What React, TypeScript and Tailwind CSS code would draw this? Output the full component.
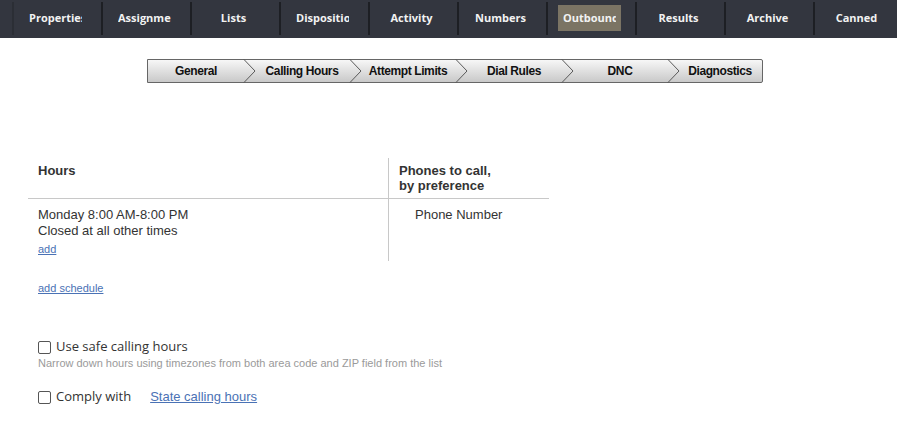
import React from 'react'

const tabs = ['Properties', 'Assignments', 'Lists', 'Dispositions', 'Activity', 'Numbers', 'Outbound', 'Results', 'Archive', 'Canned']

const steps = [
  { label: 'General', w: 'w-[96px]', pad: '' },
  { label: 'Calling Hours', w: 'w-[106px]', pad: 'pl-[10px]' },
  { label: 'Attempt Limits', w: 'w-[106px]', pad: 'pl-[10px]' },
  { label: 'Dial Rules', w: 'w-[106px]', pad: 'pl-[10px]' },
  { label: 'DNC', w: 'w-[106px]', pad: 'pl-[10px]' },
  { label: 'Diagnostics', w: 'w-[94px]', pad: 'pl-[10px]' },
]

const Chevron = () => (
  <svg className="absolute -right-[12px] top-[-1px] z-10" width="13" height="24" viewBox="0 0 13 24">
    <polyline points="0.5,0 12,12 0.5,24" fill="none" stroke="#5a5a5a" strokeWidth="1" />
  </svg>
)

const App = () => {
  return (
    <div className="w-[897px] h-[421px] bg-white overflow-hidden font-['Liberation_Sans',sans-serif] text-[#333]">
      {/* top nav */}
      <nav className="h-[38px] bg-[#33363f] flex pl-[12px] overflow-hidden">
        {tabs.map((t, i) => (
          <div
            key={t}
            className={`shrink-0 w-[89px] h-[33px] mt-[2px] border-l-2 ${i === 0 ? 'border-[#2b2e35]' : 'border-[#1d1f24]'}`}
          >
            <div className={`ml-[10px] mt-[3px] w-[63px] h-[26px] px-[5px] ${t === 'Outbound' ? 'bg-[#7b7464]' : ''}`}>
              <div className="leading-[25px] text-center overflow-hidden whitespace-nowrap font-['Open_Sans',sans-serif] font-bold text-[11px] text-[#f2f2f2]">
                {t}
              </div>
            </div>
          </div>
        ))}
      </nav>

      {/* wizard steps */}
      <div className="flex justify-start pl-[147px] mt-[21px]">
        <div className="flex h-[24px] border border-[#666] rounded-r-[2px] bg-gradient-to-b from-[#f7f7f7] to-[#c9c9c9]">
          {steps.map((s, i) => (
            <div key={s.label} className={`relative ${s.w} ${s.pad} flex items-center justify-center`}>
              <span className="font-['Liberation_Sans',sans-serif] font-bold text-[12px] tracking-[-0.4px] text-[#111]">{s.label}</span>
              {i < steps.length - 1 && <Chevron />}
            </div>
          ))}
        </div>
      </div>

      {/* schedule table */}
      <div className="ml-[28px] mt-[75px] w-[521px] text-[13px]">
        <div className="flex border-b border-[#c8c8c8]">
          <div className="w-[360px] pl-[10px] pt-[5px] h-[40px] font-bold leading-[15px]">Hours</div>
          <div className="flex-1 border-l border-[#c8c8c8] pl-[10px] pt-[5px] font-bold leading-[15px]">
            Phones to call,
            <br />
            by preference
          </div>
        </div>
        <div className="flex">
          <div className="w-[360px] pl-[10px] pt-[8px] h-[62px] leading-[16px]">
            <div>Monday 8:00 AM-8:00 PM</div>
            <div>Closed at all other times</div>
            <a href="#" className="block mt-[2px] text-[11px] text-[#4a72b5] underline w-fit">add</a>
          </div>
          <div className="flex-1 border-l border-[#c8c8c8] pl-[26px] pt-[8px] leading-[16px]">Phone Number</div>
        </div>
      </div>

      <a href="#" className="block ml-[38px] mt-[20px] text-[11px] text-[#4a72b5] underline leading-[14px] w-fit">add schedule</a>

      {/* options */}
      <div className="ml-[38px] mt-[44px] font-['Open_Sans',sans-serif]">
        <label className="flex items-center gap-[5px] text-[13px] text-[#333] h-[16px]">
          <span className="w-[13px] h-[13px] border border-[#555] rounded-[2px] bg-white" />
          Use safe calling hours
        </label>
        <div className="mt-[1px] text-[11px] text-[#9a9a9a] font-['Liberation_Sans',sans-serif] leading-[14px]">
          Narrow down hours using timezones from both area code and ZIP field from the list
        </div>
        <label className="mt-[19px] flex items-center text-[13px] text-[#333] h-[16px]">
          <span className="w-[13px] h-[13px] border border-[#555] rounded-[2px] bg-white mr-[5px]" />
          Comply with
          <a href="#" className="ml-[19px] font-['Liberation_Sans',sans-serif] text-[#4a72b5] underline">State calling hours</a>
        </label>
      </div>
    </div>
  )
}

export default App
